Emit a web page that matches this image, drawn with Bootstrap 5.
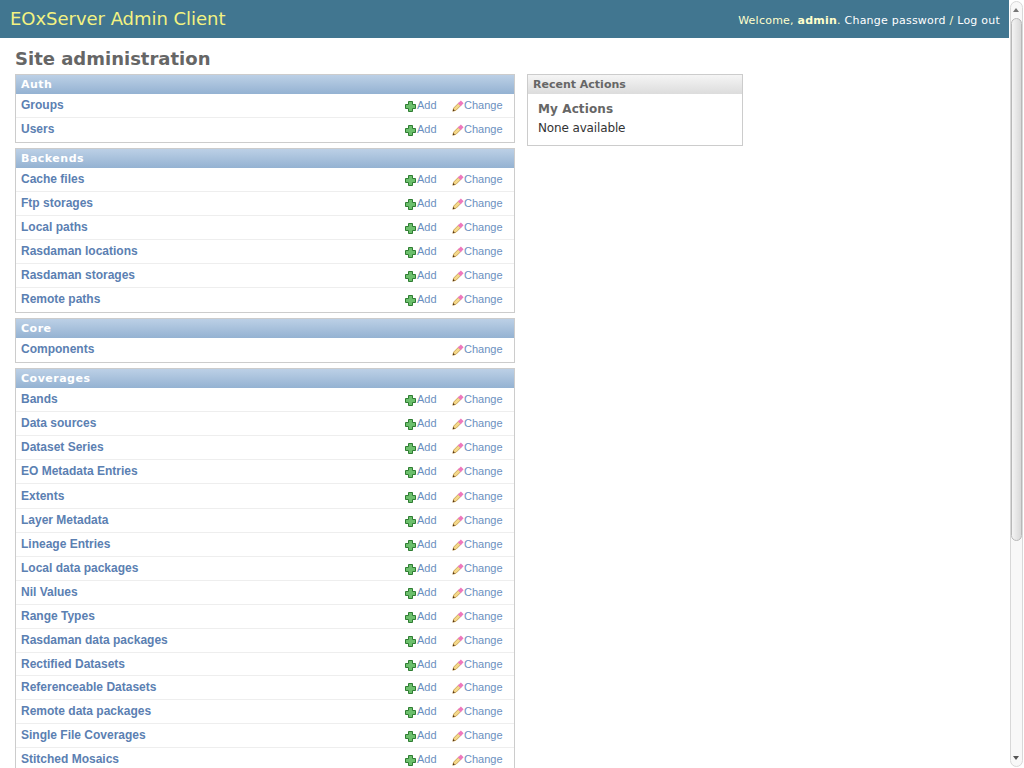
<!doctype html>
<html lang="en"><head><meta charset="utf-8"><title>Site administration</title>
<link href="https://cdn.jsdelivr.net/npm/bootstrap@5.3.0/dist/css/bootstrap.min.css" rel="stylesheet">
<style>
html,body{height:100%;overflow:hidden}
body{background:#fff;font-family:"DejaVu Sans",sans-serif;font-size:12px;color:#333;line-height:16px}
.topbar{height:38px;background:#417690;padding:0 24px 0 10px}
.brand{font-size:18px;color:#f3f281;line-height:38px;letter-spacing:-.03px}
.tools{font-size:11px;letter-spacing:.23px;color:#ffc;margin-top:3px}
.tools a{color:#fff;text-decoration:none}
.tools b{color:#ffc}
.main-area{padding:10px 20px 0 15px}
.pagetitle{font-size:18px;font-weight:700;color:#666;line-height:22px;margin:0 0 4px}
.modbox{width:500px;border:1px solid #ccc;margin-bottom:5px;background:#fff}
.modhead{height:19px;background:linear-gradient(#bcd0e6,#94b2d2);color:#fff;font-size:11px;font-weight:700;letter-spacing:.5px;line-height:19px;padding-left:5px}
.modrow{height:24px;border-bottom:1px solid #eee;padding-left:5px;font-family:"Liberation Sans",sans-serif}
.modrow:last-child{border-bottom:0}
.rowtall{height:25px;padding-top:1px}
.rowshort{height:23px}
.modname{font-size:12px;font-weight:700;color:#5b80b2;text-decoration:none;line-height:23px;height:23px}
.acts{width:110px;height:23px;font-size:11px;color:#6b8fc0;line-height:23px}
.actadd{width:47px;display:flex;align-items:center;gap:1px;margin-left:1px}
.actchg{display:flex;align-items:center;gap:0}
.actadd svg,.actchg svg{flex:none;margin-top:1px}
.sidepanel{width:216px;border:1px solid #ccc;margin-left:12px;height:72px;align-self:flex-start}
.sidehead{height:19px;background:linear-gradient(#f5f5f5,#dcdcdc);color:#666;font-size:11px;font-weight:700;line-height:19px;padding-left:5px}
.sidetitle{font-size:12px;font-weight:700;color:#666;line-height:16px;margin:7px 0 3px 10px;letter-spacing:.1px}
.sidetext{font-size:12px;color:#333;margin-left:10px;line-height:16px;letter-spacing:-.14px}
.fakebar{position:fixed;top:0;right:0;width:15px;height:768px;background:#fff}
.faketrack{position:absolute;left:1px;top:1px;width:13px;height:766px;border:1px solid #d8d8d8;border-radius:7px;background:#f8f8f8}
.fakethumb{position:absolute;left:2px;top:18px;width:11px;height:523px;border:1px solid #b8b8b8;border-radius:6px;background:linear-gradient(90deg,#f4f4f4,#d8d8d8)}
.arrowup,.arrowdn{position:absolute;left:4px;width:0;height:0;border-left:3.5px solid transparent;border-right:3.5px solid transparent}
.arrowup{top:8px;border-bottom:4px solid #777}
.arrowdn{bottom:8px;border-top:4px solid #555}
</style></head><body>
<div class="topbar d-flex justify-content-between align-items-center">
<div class="brand">EOxServer Admin Client</div>
<div class="tools">Welcome, <b>admin</b>. <a href="#">Change password</a> / <a href="#">Log out</a></div>
</div>
<div class="main-area">
<h1 class="pagetitle">Site administration</h1>
<div class="d-flex">
<div id="mods"></div>
<div class="sidepanel">
<div class="sidehead">Recent Actions</div>
<div class="sidetitle">My Actions</div>
<div class="sidetext">None available</div>
</div>
</div>
</div>
<div class="fakebar"><div class="faketrack"></div><div class="arrowup"></div><div class="fakethumb"></div><div class="arrowdn"></div></div>
<script>
const plus='<svg width="11" height="11" viewBox="0 0 11 11"><path d="M3.5.5h4v3h3v4h-3v3h-4v-3h-3v-4h3z" fill="#6cbf6c" stroke="#2f7d32"/></svg>';
const pen='<svg width="12" height="12" viewBox="0 0 12 12"><path d="M.8 11.2l.9-3.2 5-5 2.3 2.3-5 5z" fill="#f5d98a" stroke="#b58a35" stroke-width=".7"/><path d="M5.8 3.6L8.9.5l2.7 2.7-3 3.1z" fill="#ee78bd"/><path d="M.8 11.2l.6-2.1 1.5 1.5z" fill="#4a2a10"/></svg>';
const data=[["Auth",[["Groups",1],["Users",1]]],["Backends",[["Cache files",1],["Ftp storages",1],["Local paths",1],["Rasdaman locations",1],["Rasdaman storages",1],["Remote paths",1]]],["Core",[["Components",0]]],["Coverages",[["Bands",1],["Data sources",1],["Dataset Series",1],["EO Metadata Entries",1],["Extents",1,"rowtall"],["Layer Metadata",1],["Lineage Entries",1],["Local data packages",1],["Nil Values",1],["Range Types",1],["Rasdaman data packages",1],["Rectified Datasets",1,"rowshort"],["Referenceable Datasets",1],["Remote data packages",1],["Single File Coverages",1],["Stitched Mosaics",1]]]];
document.getElementById('mods').innerHTML=data.map(([h,rows])=>'<div class="modbox"><div class="modhead">'+h+'</div>'+rows.map(([n,a,c])=>'<div class="modrow d-flex justify-content-between '+(c||'')+'"><a class="modname" href="#">'+n+'</a><div class="acts d-flex"><span class="actadd">'+(a?plus+'Add':'')+'</span><span class="actchg">'+pen+'Change</span></div></div>').join('')+'</div>').join('');
</script>
<script src="https://cdn.jsdelivr.net/npm/bootstrap@5.3.0/dist/js/bootstrap.bundle.min.js"></script>
</body></html>
